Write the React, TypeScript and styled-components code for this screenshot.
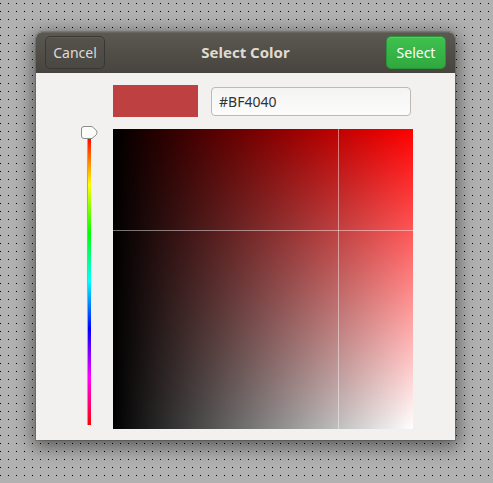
import React, { useState } from 'react';
import styled, { createGlobalStyle } from 'styled-components';

const GlobalStyle = createGlobalStyle`
  html, body {
    margin: 0;
    padding: 0;
  }
  body {
    width: 493px;
    height: 483px;
    overflow: hidden;
    background-color: #b1b1b1;
    background-image: conic-gradient(at 1px 1px, transparent 75%, #000 0);
    background-size: 8px 8px;
    background-position: 0 3px;
    font-family: "Noto Sans", "Open Sans", sans-serif;
  }
`;

const Page = styled.div`
  padding: 32px 0 0 36px;
`;

const Dialog = styled.div`
  width: 419px;
  background: #f2f1ef;
  border-radius: 6px 6px 0 0;
  box-shadow: 0 4px 18px 3px rgba(0, 0, 0, 0.5), 0 0 0 1px rgba(0, 0, 0, 0.15);
`;

const HeaderBar = styled.div`
  height: 41px;
  box-sizing: border-box;
  padding: 4px 9px 0;
  display: grid;
  grid-template-columns: 60px 1fr 60px;
  align-items: start;
  border-radius: 6px 6px 0 0;
  background: linear-gradient(to bottom, #5b5952, #47443f);
  box-shadow: inset 0 1px 0 rgba(255, 255, 255, 0.08);
`;

const HeaderButton = styled.button<{ $accent?: boolean }>`
  height: 33px;
  width: 60px;
  padding: 0;
  border-radius: 5px;
  font-family: inherit;
  font-size: 14px;
  cursor: pointer;
  color: ${(p) => (p.$accent ? '#ffffff' : '#dedbd4')};
  border: 1px solid ${(p) => (p.$accent ? '#2a9437' : '#393732')};
  background: ${(p) =>
    p.$accent
      ? 'linear-gradient(to bottom, #3ec14f, #30a93f)'
      : 'linear-gradient(to bottom, #55524c, #4a4843)'};
  box-shadow: inset 0 1px 0 rgba(255, 255, 255, ${(p) => (p.$accent ? 0.15 : 0.06)});
`;

const Title = styled.div`
  text-align: center;
  line-height: 33px;
  font-size: 15px;
  font-weight: 700;
  color: #dfdbd2;
`;

const Body = styled.div`
  display: grid;
  grid-template-columns: 77px 300px;
  grid-template-rows: 32px 300px;
  row-gap: 12px;
  padding: 12px 0 11px;
`;

const TopRow = styled.div`
  grid-column: 2;
  display: flex;
  align-items: center;
  gap: 13px;
`;

const Swatch = styled.div`
  width: 85px;
  height: 32px;
`;

const HexEntry = styled.input`
  width: 200px;
  height: 29px;
  box-sizing: border-box;
  margin-top: 1px;
  padding: 0 7px;
  border: 1px solid #bdb9b3;
  border-radius: 4px;
  background: linear-gradient(to bottom, #f4f4f3, #fcfcfc);
  font-family: inherit;
  font-size: 14px;
  color: #2e3436;
  outline: none;
`;

const SliderColumn = styled.div`
  grid-column: 1;
  padding: 8px 0 0 51px;
`;

const HueTrack = styled.div`
  position: relative;
  width: 4px;
  height: 288px;
  border-left: 1px solid #a9a7a3;
  box-sizing: border-box;
  background: linear-gradient(
    to bottom,
    #ff0000 0%,
    #ffff00 16.6%,
    #00ff00 33.3%,
    #00ffff 50%,
    #0000ff 66.6%,
    #ff00ff 83.3%,
    #ff0000 100%
  );
`;

const HueHandle = styled.svg`
  position: absolute;
  left: -7px;
  width: 17px;
  height: 13px;
`;

const Plane = styled.div`
  grid-column: 2;
  position: relative;
  width: 300px;
  height: 300px;
  overflow: hidden;
`;

const CrossLine = styled.div<{ $vertical?: boolean }>`
  position: absolute;
  background: rgba(255, 255, 255, 0.45);
  ${(p) =>
    p.$vertical
      ? 'top: 0; bottom: 0; width: 1px;'
      : 'left: 0; right: 0; height: 1px;'}
`;

function hexToHsv(hex: string) {
  const n = parseInt(hex.replace('#', ''), 16);
  const r = ((n >> 16) & 255) / 255;
  const g = ((n >> 8) & 255) / 255;
  const b = (n & 255) / 255;
  const max = Math.max(r, g, b);
  const min = Math.min(r, g, b);
  const d = max - min;
  let h = 0;
  if (d > 0) {
    if (max === r) h = ((g - b) / d) % 6;
    else if (max === g) h = (b - r) / d + 2;
    else h = (r - g) / d + 4;
    h /= 6;
    if (h < 0) h += 1;
  }
  return { h, s: max === 0 ? 0 : d / max, v: max };
}

export default function App() {
  const [hex, setHex] = useState('#BF4040');
  const { h, s, v } = hexToHsv(hex);
  const hueColor = `hsl(${Math.round(h * 360)}, 100%, 50%)`;

  return (
    <>
      <GlobalStyle />
      <Page>
        <Dialog>
          <HeaderBar>
            <HeaderButton>Cancel</HeaderButton>
            <Title>Select Color</Title>
            <HeaderButton $accent>Select</HeaderButton>
          </HeaderBar>
          <Body>
            <TopRow>
              <Swatch style={{ background: hex }} />
              <HexEntry value={hex} onChange={(e) => setHex(e.target.value)} />
            </TopRow>
            <SliderColumn>
              <HueTrack>
                <HueHandle style={{ top: h * 288 - 11 }} viewBox="0 0 17 13">
                  <path
                    d="M3 0.5 H11 L15.5 4.5 Q16.5 6.5 15.5 8.5 L11 12.5 H3 Q0.5 12.5 0.5 10 V3 Q0.5 0.5 3 0.5 Z"
                    fill="#fbfbfa"
                    stroke="#8e8c88"
                  />
                </HueHandle>
              </HueTrack>
            </SliderColumn>
            <Plane
              style={{
                background: `linear-gradient(to right, #000, rgba(0,0,0,0)), linear-gradient(to bottom, ${hueColor}, #fff)`,
              }}
            >
              <CrossLine $vertical style={{ left: Math.round(v * 300) }} />
              <CrossLine style={{ top: Math.round((1 - s) * 300) }} />
            </Plane>
          </Body>
        </Dialog>
      </Page>
    </>
  );
}
